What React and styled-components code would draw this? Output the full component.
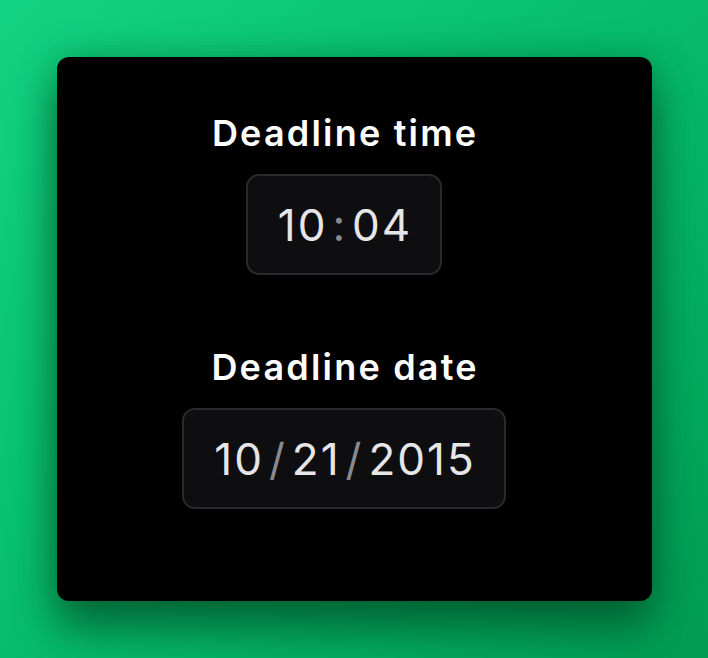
import styled, { createGlobalStyle } from "styled-components";

const GlobalStyle = createGlobalStyle`
  html, body {
    margin: 0;
    padding: 0;
  }
  body {
    font-family: Inter, "Noto Sans", sans-serif;
    -webkit-font-smoothing: antialiased;
  }
`;

const Page = styled.div`
  width: 708px;
  height: 658px;
  box-sizing: border-box;
  padding-top: 57px;
  display: flex;
  justify-content: center;
  align-items: flex-start;
  background: linear-gradient(135deg, #12d381 0%, #07bf6d 45%, #009c51 100%);
`;

const Card = styled.div`
  width: 595px;
  height: 544px;
  box-sizing: border-box;
  padding: 56px 20px 0 0;
  background: #000;
  border-radius: 12px;
  display: flex;
  flex-direction: column;
  align-items: center;
  gap: 72px;
  box-shadow: 0 28px 44px rgba(0, 70, 35, 0.65), 0 0 36px rgba(0, 80, 40, 0.35);
`;

const Field = styled.div`
  display: flex;
  flex-direction: column;
  align-items: center;
  gap: 21px;
`;

const Label = styled.div`
  color: #fff;
  font-size: 36px;
  font-weight: 600;
  line-height: 40px;
  letter-spacing: 2.2px;
  margin-right: -2.2px;
`;

const Box = styled.div`
  height: 101px;
  box-sizing: border-box;
  padding: 0 ${(p) => p.$pad}px;
  display: flex;
  align-items: center;
  background: #0e0e10;
  border: 2px solid #2a2a2d;
  border-radius: 13px;
`;

const Part = styled.span`
  color: #e6e6e8;
  font-size: 44px;
  font-weight: 400;
  letter-spacing: 2px;
  margin-right: -2px;
`;

const Sep = styled.span`
  color: #8a8a8e;
  font-size: 44px;
  font-weight: 400;
  margin: 0 ${(p) => p.$gap}px;
`;

export default function App() {
  return (
    <>
      <GlobalStyle />
      <Page>
        <Card>
          <Field>
            <Label>Deadline time</Label>
            <Box $pad={30}>
              <Part>10</Part>
              <Sep $gap={7}>:</Sep>
              <Part>04</Part>
            </Box>
          </Field>
          <Field>
            <Label>Deadline date</Label>
            <Box $pad={30}>
              <Part>10</Part>
              <Sep $gap={7}>/</Sep>
              <Part>21</Part>
              <Sep $gap={7}>/</Sep>
              <Part>2015</Part>
            </Box>
          </Field>
        </Card>
      </Page>
    </>
  );
}
